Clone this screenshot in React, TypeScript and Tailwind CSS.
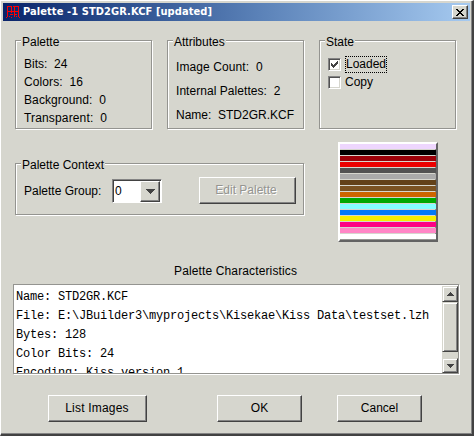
import type { ReactNode } from "react";

const sans = "font-['Liberation_Sans',Arial,sans-serif]";

const stripes = [
  "bg-[#eed6fe]", "bg-black", "bg-[#9c0008]", "bg-[#ec0000]",
  "bg-[#525252]", "bg-[#aaaaaa]", "bg-[#634119]", "bg-[#7b5222]",
  "bg-[#ce6500]", "bg-[#00a800]", "bg-[#84ffff]", "bg-[#0079f7]",
  "bg-[#f4ee00]", "bg-[#ff0084]", "bg-[#ff86c6]", "bg-white",
];

function Group({ title, className, children }: { title: string; className: string; children: ReactNode }) {
  return (
    <section className={`border border-[#949490] shadow-[1px_1px_0_#fff,inset_1px_1px_0_#fff] ${className}`}>
      <h2 className="-mt-[6px] ml-[5px] h-[14px] w-fit bg-[#d6d6ce] px-px leading-[14px]">{title}</h2>
      {children}
    </section>
  );
}

function Button({ className, children }: { className: string; children: ReactNode }) {
  return (
    <button className={`flex h-[27px] shrink-0 items-center justify-center border border-t-white border-l-white border-r-[#424242] border-b-[#424242] shadow-[inset_-1px_-1px_0_#848484] ${className}`}>
      {children}
    </button>
  );
}

function Check({ checked }: { checked?: boolean }) {
  return (
    <span className="flex size-[13px] shrink-0 items-center justify-center border border-t-[#848484] border-l-[#848484] border-r-white border-b-white bg-white shadow-[inset_1px_1px_0_#525252,inset_-1px_-1px_0_#d6d6ce]">
      {checked && (
        <svg width="7" height="7" viewBox="0 0 7 7" shapeRendering="crispEdges" fill="#424242">
          <path d="M0 2h1v1h1v1h1v-1h1v-1h1v-1h1v-1h1v3h-1v1h-1v1h-1v1h-1v1h-1v-1h-1v-1h-1z" />
        </svg>
      )}
    </span>
  );
}

function ScrollButton({ up }: { up?: boolean }) {
  return (
    <div className={`flex w-4 shrink-0 items-center justify-center border border-t-[#d6d6ce] border-l-[#d6d6ce] border-r-[#424242] border-b-[#424242] bg-[#d6d6ce] shadow-[inset_1px_1px_0_#fff,inset_-1px_-1px_0_#848484] ${up ? "h-4" : "h-[15px]"}`}>
      <svg width="7" height="4" viewBox="0 0 7 4" shapeRendering="crispEdges" fill="#424242">
        <path d={up ? "M3 0h1v1h1v1h1v1h1v1h-7v-1h1v-1h1v-1h1z" : "M0 0h7v1h-1v1h-1v1h-1v1h-1v-1h-1v-1h-1v-1h-1z"} />
      </svg>
    </div>
  );
}

export default function App() {
  return (
    <main className={`flex h-[436px] w-[474px] flex-col overflow-hidden border-t border-r-2 border-b-2 border-l border-t-white border-l-white border-r-[#424242] border-b-[#424242] bg-[#d6d6ce] text-[12px] text-black shadow-[inset_-1px_-1px_0_#848484] ${sans}`}>
      <header className="mt-[2px] ml-[2px] flex h-[18px] w-[467px] shrink-0 items-center bg-linear-to-r from-[#0a246a] via-[#5b82b8] via-55% to-[#a6caf0] pr-[2px] pl-[3px]">
        <svg className="shrink-0" width="14" height="14" viewBox="0 0 14 14" shapeRendering="crispEdges" fill="#f00">
          <path d="M1 1h5v1h-5zM7 1h6v1h-6zM1 1h1v11h-1zM5 1h1v7h-1zM8 1h1v11h-1zM12 1h1v11h-1zM1 6h12v1h-12zM4 9h3v1h-3zM8 9h3v1h-3zM3 11h1v1h-1zM5 12h1v1h-1zM0 12h1v1h-1zM10 11h1v1h-1zM13 12h1v1h-1z" />
        </svg>
        <h1 className="ml-[3px] text-[11px] leading-[18px] font-bold tracking-[0.08px] whitespace-pre text-white font-['DejaVu_Sans_Condensed','DejaVu_Sans',sans-serif]">Palette -1 STD2GR.KCF [updated]</h1>
        <button className="ml-auto flex h-[14px] w-4 items-center justify-center border border-t-white border-l-white border-r-[#424242] border-b-[#424242] bg-[#d6d6ce] shadow-[inset_-1px_-1px_0_#848484]">
          <svg width="8" height="7" viewBox="0 0 8 7" shapeRendering="crispEdges" fill="#000">
            <path d="M0 0h2v1h1v1h2v-1h1v-1h2v1h-1v1h-1v1h-1v1h1v1h1v1h1v1h-2v-1h-1v-1h-2v1h-1v1h-2v-1h1v-1h1v-1h1v-1h-1v-1h-1v-1h-1z" />
          </svg>
        </button>
      </header>

      <div className="mt-[19px] ml-[14px] flex gap-[15px]">
        <Group title="Palette" className="h-[89px] w-[137px]">
          <div className="mt-[6px] ml-[8px] leading-[18px] whitespace-pre">
            <p>Bits:  24</p>
            <p className="tracking-[0.1px]">Colors:  16</p>
            <p className="tracking-[0.1px]">Background:  0</p>
            <p className="tracking-[0.15px]">Transparent:  0</p>
          </div>
        </Group>
        <Group title="Attributes" className="h-[89px] w-[137px]">
          <div className="mt-[6px] ml-[8px] leading-6 whitespace-pre">
            <p className="tracking-[0.1px]">Image Count:  0</p>
            <p className="tracking-[0.05px]">Internal Palettes:  2</p>
            <p>Name:  STD2GR.KCF</p>
          </div>
        </Group>
        <Group title="State" className="h-[89px] w-[137px]">
          <div className="mt-[6px] ml-[8px] leading-[18px]">
            <label className="flex h-[18px] items-center">
              <Check checked />
              <span className="ml-[4px] h-[17px] w-[42px] border border-dotted border-black leading-[15px]">Loaded</span>
            </label>
            <label className="flex h-[18px] items-center">
              <Check />
              <span className="ml-[4px]">Copy</span>
            </label>
          </div>
        </Group>
      </div>

      <div className="mt-[13px] ml-[14px] flex">
        <Group title="Palette Context" className="mt-[21px] h-[52px] w-[289px]">
          <div className="mt-[5px] ml-[8px] flex h-[27px] items-center">
            <span className="w-[88px]">Palette Group:</span>
            <div className="flex h-6 w-[50px] border border-t-[#848484] border-l-[#848484] border-r-white border-b-white bg-white shadow-[inset_1px_1px_0_#424242]">
              <span className="w-[27px] pl-[2px] leading-[22px]">0</span>
              <span className="mt-px flex h-[21px] w-5 items-center justify-center border border-t-white border-l-white border-r-[#424242] border-b-[#424242] bg-[#d6d6ce] shadow-[inset_-1px_-1px_0_#848484]">
                <svg width="9" height="5" viewBox="0 0 9 5" shapeRendering="crispEdges" fill="#424242">
                  <path d="M0 0h9v1h-1v1h-1v1h-1v1h-1v1h-1v-1h-1v-1h-1v-1h-1v-1h-1z" />
                </svg>
              </span>
            </div>
            <Button className="ml-[37px] w-[97px] pr-[3px] pb-[2px] text-[#949490] [text-shadow:1px_1px_0_#fff]">Edit Palette</Button>
          </div>
        </Group>
        <div className="ml-[34px] size-[100px] border-2 border-t-white border-l-white border-r-[#636363] border-b-[#636363] shadow-[inset_-1px_-1px_0_#949490]">
          {stripes.map((color) => (
            <div key={color} className={`mb-px h-[5px] ${color}`} />
          ))}
        </div>
      </div>

      <h2 className="mt-[20px] h-[18px] pl-[173px] leading-[18px] tracking-[0.13px]">Palette Characteristics</h2>

      <div className="mt-[4px] ml-[12px] flex h-[90px] w-[446px] shrink-0 border border-[#949490] bg-white shadow-[1px_1px_0_#fff]">
        <pre className="h-[88px] grow overflow-hidden pt-[3px] pl-[2px] text-[12px] leading-[19px] tracking-[-0.2px] font-['Liberation_Mono','Courier_New',monospace]">{`Name: STD2GR.KCF
File: E:\\JBuilder3\\myprojects\\Kisekae\\Kiss Data\\testset.lzh
Bytes: 128
Color Bits: 24
Encoding: Kiss version 1`}</pre>
        <div className="mt-px flex w-4 shrink-0 flex-col bg-[#d6d6ce]">
          <ScrollButton up />
          <div className="h-[50px] border border-t-[#d6d6ce] border-l-[#d6d6ce] border-r-[#424242] border-b-[#424242] shadow-[inset_1px_1px_0_#fff,inset_-1px_-1px_0_#848484]" />
          <div className="grow" />
          <ScrollButton />
        </div>
      </div>

      <footer className="mt-[21px] ml-[47px] flex">
        <Button className="w-[99px] pb-px pr-px tracking-[0.2px]">List Images</Button>
        <Button className="ml-[70px] w-[85px] pb-px">OK</Button>
        <Button className="ml-[35px] w-[85px] pb-px">Cancel</Button>
      </footer>
    </main>
  );
}
